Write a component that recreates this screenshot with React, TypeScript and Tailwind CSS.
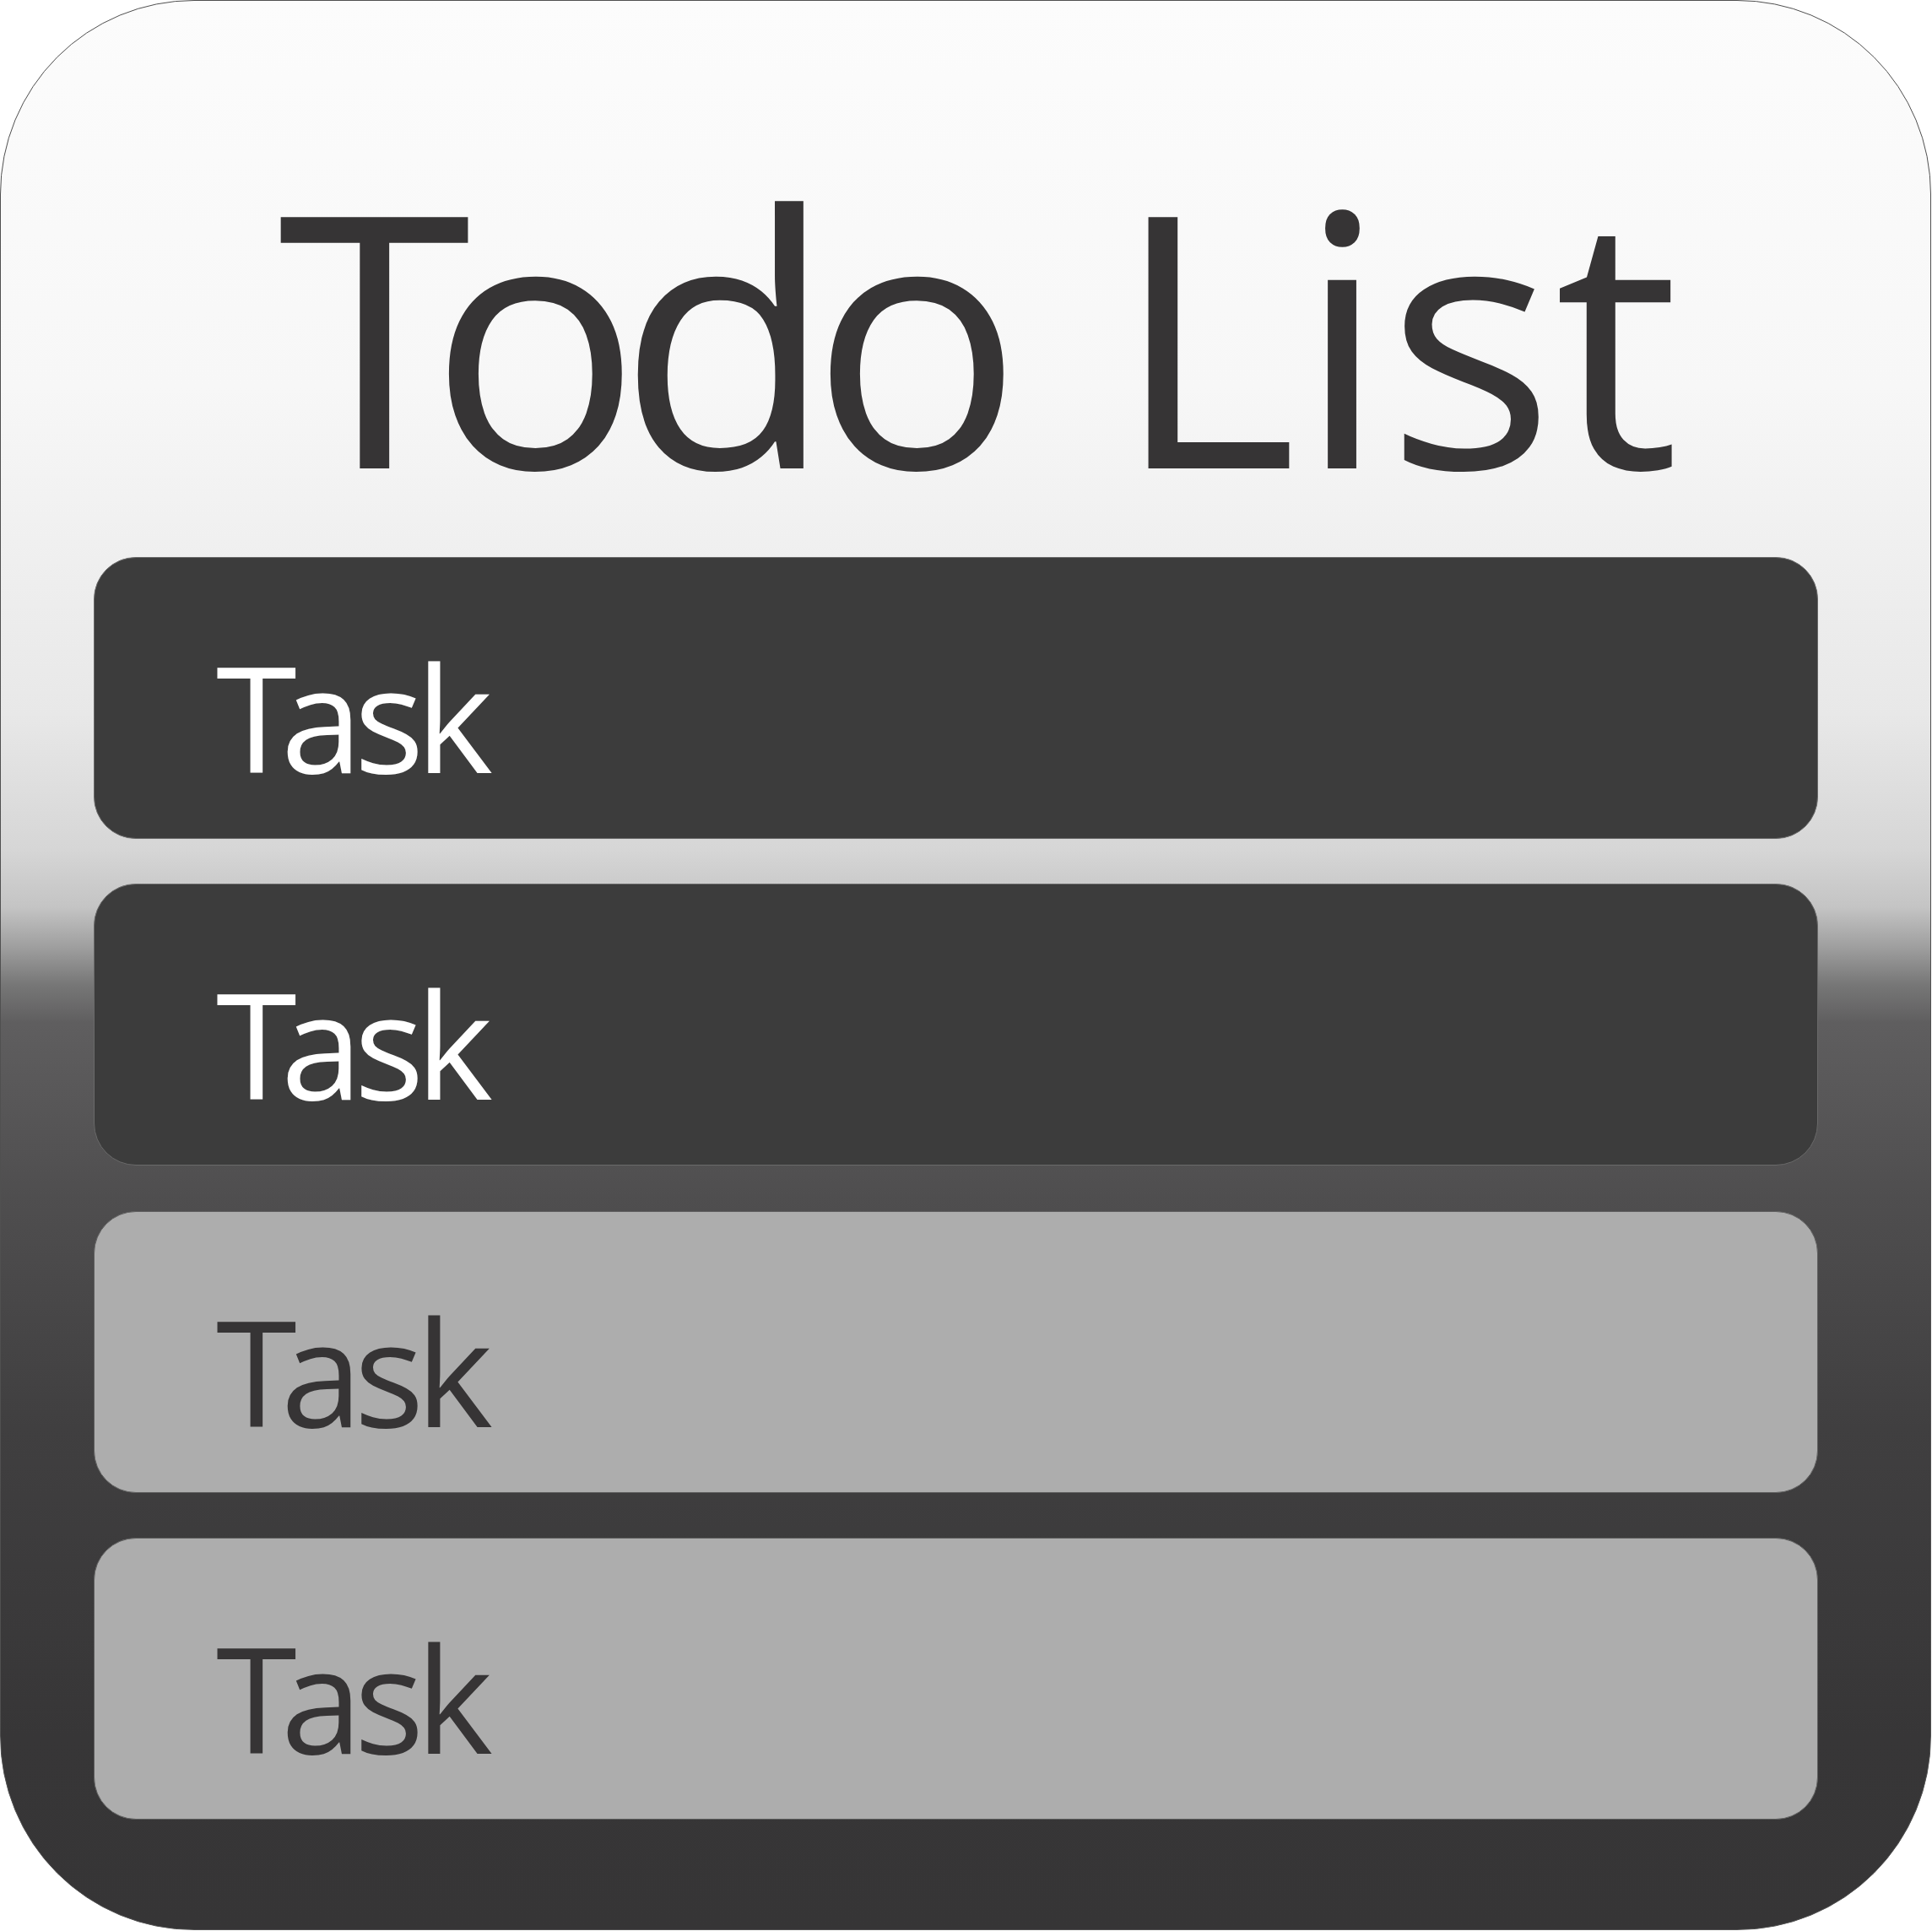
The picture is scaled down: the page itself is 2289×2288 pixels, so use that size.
const tasks = [
  { id: 1, label: "Task", done: false },
  { id: 2, label: "Task", done: false },
  { id: 3, label: "Task", done: true },
  { id: 4, label: "Task", done: true },
];

// The reference face sets these letters tighter than Open Sans does,
// so the title and the task labels carry a little manual kerning.
function TaskLabel({ text }: { text: string }) {
  return (
    <>
      <span className="tracking-[-19px]">{text.slice(0, 1)}</span>
      <span className="tracking-[-10px]">{text.slice(1, 3)}</span>
      {text.slice(3)}
    </>
  );
}

export default function App() {
  return (
    <div className="min-h-screen w-full bg-white">
      <div className="flex h-[2287px] w-[2288px] flex-col overflow-hidden rounded-[230px] border border-[#505050] bg-[linear-gradient(180deg,#fcfcfc_0%,#f7f7f7_20%,#e8e8e8_37%,#d6d6d6_44%,#c4c4c4_47%,#a0a0a0_49%,#777777_51%,#5f5e5f_53%,#585758_57%,#4f4e4f_62%,#403f40_74%,#373637_90%,#363536_100%)]">
        <h1 className="h-[659px] pt-[184px] pl-[328px] font-['Open_Sans',sans-serif] text-[417px] leading-none font-normal whitespace-pre text-[#363435]">
          <span className="tracking-[-50px]">T</span>
          <span className="tracking-[-27px]">od</span>o List
        </h1>
        <ul className="flex flex-col gap-[53.33px] pr-[133px] pl-[110px]">
          {tasks.map((task) => (
            <li
              key={task.id}
              className={`h-[334px] rounded-[50px] border pt-[101px] pl-[144px] font-['Open_Sans',sans-serif] text-[174px] leading-none whitespace-pre ${
                task.done
                  ? "border-[#5e5e5e] bg-[#adadad] text-[#363435]"
                  : "border-[#6a6a6a] bg-[#3c3c3c] text-white"
              }`}
            >
              <TaskLabel text={task.label} />
            </li>
          ))}
        </ul>
      </div>
    </div>
  );
}
